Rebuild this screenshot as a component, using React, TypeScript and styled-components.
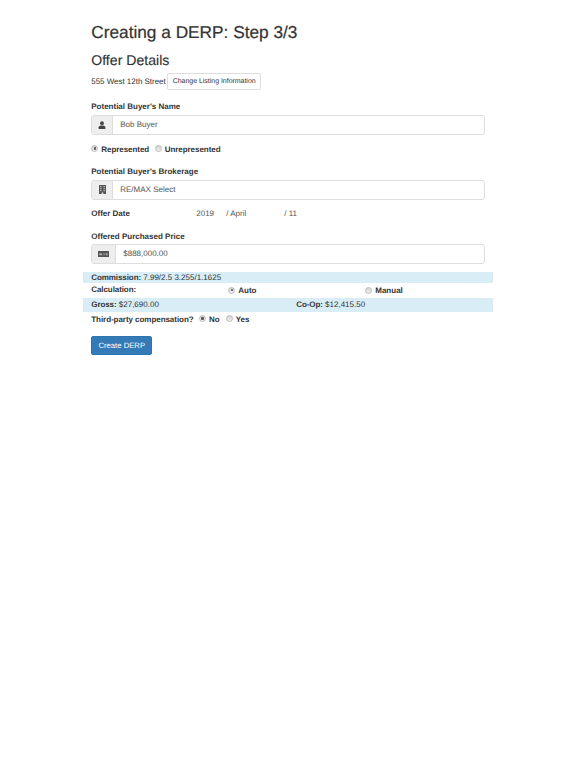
import React from "react";
import styled, { createGlobalStyle } from "styled-components";

const Global = createGlobalStyle`
  html, body { margin: 0; padding: 0; background: #fff; }
  body {
    font-family: "Liberation Sans", Arial, sans-serif;
    font-size: 8px;
    color: #333;
    line-height: 13px;
    text-rendering: geometricPrecision;
  }
`;
const Page = styled.div`
  width: 410px;
  margin-left: 83px;
  padding-top: 20px;
`;
const Inner = styled.div`
  padding: 0 8px 0 8.25px;
`;
const Title = styled.h1`
  margin: 0;
  font-size: 17.25px;
  font-weight: 400;
  line-height: 24px;
  color: #333;
  -webkit-text-stroke: 0.2px #333;
`;
const Subtitle = styled.h2`
  margin: 7px 0 0;
  font-size: 14.1px;
  font-weight: 400;
  line-height: 18px;
  color: #333;
  -webkit-text-stroke: 0.15px #333;
`;
const ListingRow = styled.div`
  display: flex;
  align-items: center;
  gap: 1.5px;
  margin-top: 4px;
  letter-spacing: -0.03px;
`;
const SmallButton = styled.div`
  box-sizing: border-box;
  height: 17px;
  width: 94px;
  text-align: center;
  border: 1px solid #ddd;
  border-radius: 2px;
  font-size: 6.95px;
  line-height: 15px;
  letter-spacing: 0;
`;
const Label = styled.div<{ $top: number }>`
  margin-top: ${(p) => p.$top}px;
  font-weight: 700;
  line-height: 13px;
`;
const InputGroup = styled.div<{ $top: number }>`
  box-sizing: border-box;
  display: flex;
  width: 393.5px;
  height: 19.5px;
  margin-top: ${(p) => p.$top}px;
  border: 1px solid #ddd;
  border-radius: 3px;
  overflow: hidden;
`;
const Addon = styled.div<{ $w: number }>`
  box-sizing: border-box;
  flex: 0 0 ${(p) => p.$w}px;
  display: flex;
  align-items: center;
  justify-content: center;
  background: #eee;
  border-right: 1px solid #ddd;
  color: #444;
`;
const Value = styled.div`
  padding-left: 7px;
  line-height: 17px;
  color: #555;
`;
const RadioRow = styled.div<{ $top: number }>`
  display: flex;
  align-items: center;
  height: 13px;
  margin-top: ${(p) => p.$top}px;
  font-weight: 700;
  letter-spacing: -0.05px;
`;
const Dot = styled.span<{ $on?: boolean }>`
  position: relative;
  display: inline-block;
  width: 7px;
  height: 7px;
  margin-right: 3px;
  margin-top: -1px;
  border-radius: 50%;
  background: linear-gradient(#d4d4d4, #f0f0f0);
  border: 0.5px solid #bbb;
  box-sizing: border-box;
  &::after {
    content: "";
    display: ${(p) => (p.$on ? "block" : "none")};
    position: absolute;
    inset: 1.25px;
    border-radius: 50%;
    background: #555;
  }
`;
const RadioItem = styled.span<{ $gap?: number }>`
  display: inline-flex;
  align-items: center;
  margin-right: ${(p) => p.$gap ?? 0}px;
`;
const DateRow = styled.div`
  display: grid;
  grid-template-columns: 105px 30px 58px auto;
  margin-top: 7.5px;
  line-height: 13px;
  color: #555;
`;
const DateLabel = styled.span`
  font-weight: 700;
  color: #333;
`;
const Band = styled.div<{ $on?: boolean; $h: number; $top?: number; $lift?: number }>`
  box-sizing: border-box;
  display: flex;
  align-items: center;
  height: ${(p) => p.$h}px;
  margin-top: ${(p) => p.$top ?? 0}px;
  padding: 0 8px ${(p) => p.$lift ?? 0}px 8.25px;
  background: ${(p) => (p.$on ? "#d9edf7" : "transparent")};
`;
const Cell = styled.div<{ $w?: number }>`
  flex: 0 0 ${(p) => p.$w ?? 137}px;
  display: flex;
  align-items: center;
  font-weight: 400;
`;
const RadioCell = styled(Cell)`
  font-weight: 700;
`;
const Strong = styled.span`
  font-weight: 700;
  letter-spacing: -0.08px;
`;
const CalcLabel = styled(Strong)`
  margin-top: -3px;
`;
const Primary = styled.div`
  box-sizing: border-box;
  width: 61px;
  height: 18.5px;
  margin-top: 10.5px;
  text-align: center;
  background: #337ab7;
  border: 0.5px solid #2e74ad;
  border-radius: 2px;
  color: #fff;
  line-height: 17.5px;
  font-size: 7.7px;
`;

const UserIcon = () => (
  <svg width="8" height="8" viewBox="0 0 12 12" fill="currentColor">
    <circle cx="6" cy="3.2" r="2.8" />
    <path d="M1 12V9.2C1 7.6 3 6.8 6 6.8s5 .8 5 2.4V12z" />
  </svg>
);
const BuildingIcon = () => (
  <svg width="7" height="9" viewBox="0 0 7 9" fill="#555">
    <path d="M0 0h7v9H4.3V7.4H2.7V9H0z" />
    <path fill="#aaa" d="M1 1h1.6v1.2H1zM4.4 1H6v1.2H4.4zM1 3h1.6v1.2H1zM4.4 3H6v1.2H4.4zM1 5h1.6v1.2H1zM4.4 5H6v1.2H4.4z" />
  </svg>
);
const MoneyIcon = () => (
  <svg width="11" height="6.5" viewBox="0 0 11 6.5" fill="#555">
    <path d="M0 0h11v6.5H0z" />
    <path fill="#aaa" d="M1.2 2.2h3v2h-3zM5.5 2.2h1v2h-1zM7.7 2.2h2v2h-2z" />
  </svg>
);

export default function App() {
  return (
    <Page>
      <Global />
      <Inner>
        <Title>Creating a DERP: Step 3/3</Title>
        <Subtitle>Offer Details</Subtitle>
        <ListingRow>
          555 West 12th Street
          <SmallButton>Change Listing Information</SmallButton>
        </ListingRow>
        <Label $top={9.5}>Potential Buyer's Name</Label>
        <InputGroup $top={2.5}>
          <Addon $w={21}><UserIcon /></Addon>
          <Value>Bob Buyer</Value>
        </InputGroup>
        <RadioRow $top={8}>
          <RadioItem $gap={5.5}><Dot $on />Represented</RadioItem>
          <RadioItem><Dot />Unrepresented</RadioItem>
        </RadioRow>
        <Label $top={9.5}>Potential Buyer's Brokerage</Label>
        <InputGroup $top={2}>
          <Addon $w={21}><BuildingIcon /></Addon>
          <Value>RE/MAX Select</Value>
        </InputGroup>
        <DateRow>
          <DateLabel>Offer Date</DateLabel>
          <span>2019</span>
          <span>/ April</span>
          <span>/ 11</span>
        </DateRow>
        <Label $top={9.5}>Offered Purchased Price</Label>
        <InputGroup $top={1.5}>
          <Addon $w={24}><MoneyIcon /></Addon>
          <Value>$888,000.00</Value>
        </InputGroup>
      </Inner>
      <Band $on $h={11} $top={8.5}>
        <span><Strong>Commission:</Strong> 7.99/2.5 3.255/1.1625</span>
      </Band>
      <Band $h={15}>
        <Cell><CalcLabel>Calculation:</CalcLabel></Cell>
        <RadioCell><RadioItem><Dot $on />Auto</RadioItem></RadioCell>
        <RadioCell><RadioItem><Dot />Manual</RadioItem></RadioCell>
      </Band>
      <Band $on $h={14} $lift={2}>
        <Cell $w={205}><span><Strong>Gross:</Strong> $27,690.00</span></Cell>
        <Cell><span><Strong>Co-Op:</Strong> $12,415.50</span></Cell>
      </Band>
      <Inner>
        <RadioRow $top={0.5}>
          <RadioItem $gap={5.5}>Third-party compensation?</RadioItem>
          <RadioItem $gap={6}><Dot $on />No</RadioItem>
          <RadioItem><Dot />Yes</RadioItem>
        </RadioRow>
        <Primary>Create DERP</Primary>
      </Inner>
    </Page>
  );
}
